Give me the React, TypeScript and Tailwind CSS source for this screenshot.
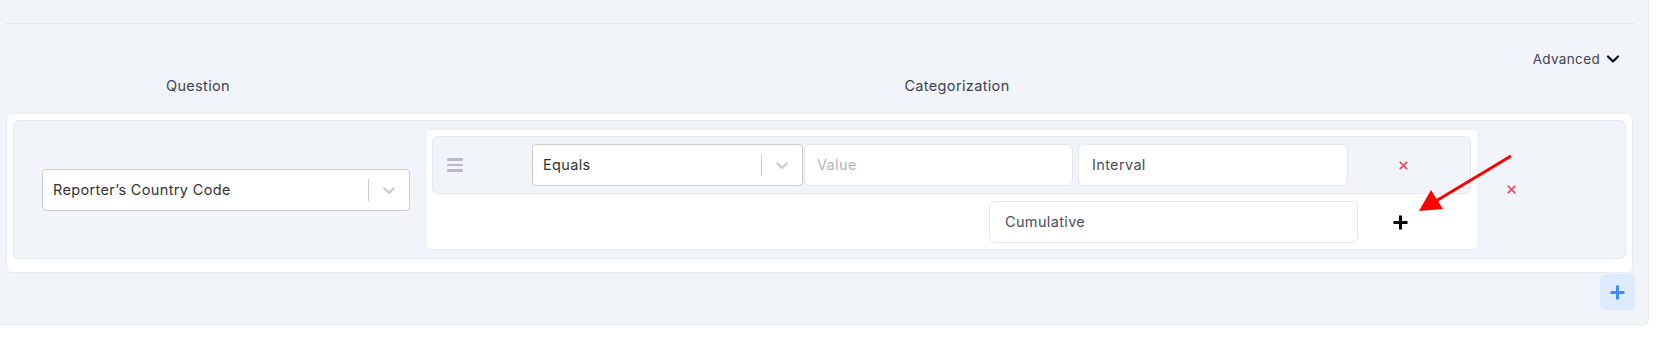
import React from "react";

const Chevron = () => (
  <svg width="20" height="20" viewBox="0 0 20 20" fill="#cccccc" aria-hidden="true">
    <path d="M4.516 7.548c0.436-0.446 1.043-0.481 1.576 0l3.908 3.747 3.908-3.747c0.533-0.481 1.141-0.446 1.574 0 0.436 0.445 0.408 1.197 0 1.615-0.406 0.418-4.695 4.502-4.695 4.502-0.217 0.223-0.502 0.335-0.787 0.335s-0.57-0.112-0.789-0.335c0 0-4.287-4.084-4.695-4.502s-0.436-1.17 0-1.615z" />
  </svg>
);

const Select = ({ label, w }: { label: string; w: string }) => (
  <div className={`flex items-center h-[42px] bg-white border border-[#cccccc] rounded-[4px] shrink-0 ${w}`}>
    <span className="flex-1 pl-[10px] text-[14.5px] text-[#333333]">{label}</span>
    <span className="w-px h-[22px] bg-[#cccccc]" />
    <span className="w-[40px] flex justify-center items-center">
      <Chevron />
    </span>
  </div>
);

const RedX = () => (
  <svg width="9" height="9" viewBox="0 0 10 10" aria-hidden="true">
    <path d="M1.5 1.5 L8.5 8.5 M8.5 1.5 L1.5 8.5" stroke="#f0506e" strokeWidth="2.2" strokeLinecap="round" />
  </svg>
);

export default function App() {
  return (
    <div className="relative w-[1660px] h-[344px] bg-white font-['Inter','Noto_Sans',sans-serif] tracking-[0.35px]">
      <div className="w-[1649px] h-[325px] bg-[#f1f4f8] border-r border-b border-[#e6e9ee] rounded-br-[6px] flex flex-col">
        <div className="h-[23px]" />
        <div className="ml-[5px] w-[1630px] h-px bg-[#e3e7ec]" />
        <div className="h-[25px]" />
        <div className="h-[20px] flex items-center justify-end pr-[28px] gap-[6px]">
          <span className="text-[13.5px] text-[#3f4354]">Advanced</span>
          <svg width="14" height="10" viewBox="0 0 14 10" aria-hidden="true">
            <path d="M2 2.5 L7 7.5 L12 2.5" stroke="#111111" strokeWidth="2.2" fill="none" strokeLinecap="round" strokeLinejoin="round" />
          </svg>
        </div>
        <div className="h-[7px]" />
        <div className="h-[20px] flex items-center pl-[6px] text-[14.5px] text-[#3f4354]">
          <span className="w-[384px] text-center">Question</span>
          <span className="ml-[35px] w-[1064px] text-center">Categorization</span>
        </div>
        <div className="h-[17px]" />
        <div className="ml-[6px] w-[1627px] h-[160px] bg-white border border-[#e8ebf0] rounded-[6px] pt-[6px] px-[6px]">
          <div className="h-[139px] bg-[#f1f4f8] border border-[#e6e9ee] rounded-[6px] flex items-center pl-[28px]">
            <Select label="Reporter’s Country Code" w="w-[368px]" />
            <div className="ml-[15px] w-[1054px] h-[121px] bg-white border border-[#e8ebf0] rounded-[6px] pt-[6px] pl-[6px]">
              <div className="w-[1039px] h-[58px] bg-[#f1f4f8] border border-[#e6e9ee] rounded-[6px] flex items-center pl-[14px]">
                <div className="flex flex-col gap-[3px] w-[16px]">
                  <span className="h-[2.5px] bg-[#b9b9c8] rounded-full" />
                  <span className="h-[2.5px] bg-[#b9b9c8] rounded-full" />
                  <span className="h-[2.5px] bg-[#b9b9c8] rounded-full" />
                </div>
                <div className="ml-[69px]">
                  <Select label="Equals" w="w-[271px]" />
                </div>
                <div className="ml-[1px] w-[269px] h-[42px] bg-white border border-[#e4e7ee] rounded-[6px] flex items-center pl-[12px] text-[14.5px] text-[#b3b6c2]">
                  Value
                </div>
                <div className="ml-[5px] w-[270px] h-[42px] bg-white border border-[#e4e7ee] rounded-[6px] flex items-center pl-[13px] text-[14.5px] text-[#4a4e5c]">
                  Interval
                </div>
                <div className="ml-[51px] flex items-center">
                  <RedX />
                </div>
              </div>
              <div className="h-[56px] flex items-center pl-[557px]">
                <div className="w-[369px] h-[42px] bg-white border border-[#e4e7ee] rounded-[6px] flex items-center pl-[15px] text-[14.5px] text-[#4a4e5c]">
                  Cumulative
                </div>
                <svg className="ml-[34px]" width="17" height="17" viewBox="0 0 17 17" aria-hidden="true">
                  <path d="M8.5 1.5 V15.5 M1.5 8.5 H15.5" stroke="#000000" strokeWidth="3" />
                </svg>
              </div>
            </div>
            <div className="ml-[28px] flex items-center">
              <RedX />
            </div>
          </div>
        </div>
        <div className="flex justify-end pr-[13px] pt-px">
          <div className="w-[35px] h-[36px] rounded-[6px] bg-[#dcebfd] flex items-center justify-center">
            <svg width="17" height="17" viewBox="0 0 17 17" aria-hidden="true">
              <path d="M8.5 1.5 V15.5 M1.5 8.5 H15.5" stroke="#3b8ef5" strokeWidth="3" />
            </svg>
          </div>
        </div>
      </div>
      <svg className="absolute left-0 top-0 pointer-events-none" width="1660" height="344" aria-hidden="true">
        <line x1="1511" y1="156" x2="1436" y2="201" stroke="#ff0000" strokeWidth="3" />
        <polygon points="1419,211 1431,190 1443,209" fill="#ff0000" />
      </svg>
    </div>
  );
}
